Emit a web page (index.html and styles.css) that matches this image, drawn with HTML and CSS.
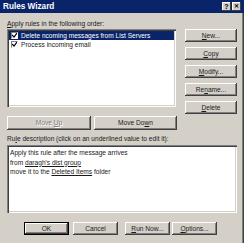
FILE: index.html
```html
<!DOCTYPE html>
<html lang="en">
<head>
    <meta charset="UTF-8">
    <title>Rules Wizard</title>
    <link rel="stylesheet" href="styles.css">
</head>
<body>
<div class="window">
    <div class="titlebar">
        <span class="title">Rules Wizard</span>
        <span class="tbtn">?</span>
        <span class="tbtn close">&#x2715;</span>
    </div>

    <div class="content">
        <div class="label"><u>A</u>pply rules in the following order:</div>

        <div class="toprow">
            <div class="listbox">
                <div class="row selected">
                    <span class="check"><svg width="5" height="5" viewBox="0 0 5 5"><path d="M0 2 L2 4 L5 0" fill="none" stroke="#000" stroke-width="1.2"/></svg></span>
                    Delete ncoming messages from List Servers
                </div>
                <div class="row">
                    <span class="check"><svg width="5" height="5" viewBox="0 0 5 5"><path d="M0 2 L2 4 L5 0" fill="none" stroke="#000" stroke-width="1.2"/></svg></span>
                    Process incoming email
                </div>
            </div>
            <div class="sidebtns">
                <div class="btn"><u>N</u>ew...</div>
                <div class="btn"><u>C</u>opy</div>
                <div class="btn"><u>M</u>odify...</div>
                <div class="btn">Re<u>n</u>ame...</div>
                <div class="btn"><u>D</u>elete</div>
            </div>
        </div>

        <div class="moverow">
            <div class="btn disabled move-up">Move <u>U</u>p</div>
            <div class="btn move-down">Move Do<u>w</u>n</div>
        </div>

        <div class="label desc-label">Ru<u>l</u>e description (click on an underlined value to edit it):</div>

        <div class="descbox">
            <div>Apply this rule after the message arrives</div>
            <div>from <u>daragh's dist group</u></div>
            <div>move it to the <u>Deleted Items</u> folder</div>
        </div>

        <div class="bottomrow">
            <div class="btn default ok">OK</div>
            <div class="btn cancel">Cancel</div>
            <div class="btn run"><u>R</u>un Now...</div>
            <div class="btn options"><u>O</u>ptions...</div>
        </div>
    </div>
</div>
</body>
</html>
```

FILE: styles.css
```css
body {
    margin: 0;
    background: #d4d0c8;
}

.window {
    width: 244px;
    height: 243px;
    background: #d4d0c8;
    box-shadow: inset -1px 0 #404040, inset -2px 0 #808080;
    font-family: "Liberation Sans", Arial, sans-serif;
    font-size: 6.6px;
    color: #1a1a1a;
    overflow: hidden;
}

.titlebar {
    height: 13px;
    background: #0a246a;
    display: flex;
    align-items: center;
    padding: 0 3px 0 3px;
}

.title {
    flex: 1;
    color: #fff;
    font-weight: bold;
    font-size: 8.2px;
}

.tbtn {
    width: 9px;
    height: 9px;
    background: #d4d0c8;
    box-shadow: inset -1px -1px #404040, inset 1px 1px #fff;
    font-size: 7px;
    font-weight: bold;
    line-height: 9px;
    text-align: center;
    color: #000;
}

.tbtn.close {
    margin-left: 1px;
    font-size: 6px;
}

.content {
    padding: 0 7px;
}

.label {
    line-height: 9px;
    margin-top: 6px;
}

.toprow {
    display: flex;
    align-items: flex-start;
    margin-top: 1px;
}

.listbox {
    width: 169px;
    height: 78px;
    background: #fff;
    box-sizing: border-box;
    padding: 2px 1px;
    box-shadow: inset 1px 1px #808080, inset 2px 2px #404040, inset -1px -1px #fff, inset -2px -2px #d4d0c8;
}

.row {
    height: 9px;
    line-height: 9px;
    display: flex;
    align-items: center;
    padding-left: 2px;
    margin-left: 1px;
    margin-right: 1px;
}

.row.selected {
    background: #0a246a;
    color: #fff;
}

.check {
    width: 7px;
    height: 7px;
    box-sizing: border-box;
    background: #fff;
    border: 1px solid #808080;
    border-right-color: #fff;
    border-bottom-color: #fff;
    display: flex;
    align-items: center;
    justify-content: center;
    margin-right: 3px;
}

.sidebtns {
    display: flex;
    flex-direction: column;
    gap: 5px;
    margin-left: 9px;
    width: 52px;
}

.btn {
    height: 13px;
    line-height: 13px;
    text-align: center;
    background: #d4d0c8;
    box-sizing: border-box;
    box-shadow: inset -1px -1px #404040, inset 1px 1px #fff, inset -2px -2px #808080;
}

.btn.disabled {
    color: #808080;
    text-shadow: 1px 1px #fff;
}

.moverow {
    display: flex;
    margin-top: 2px;
}

.move-up {
    width: 84px;
    height: 14px;
    line-height: 14px;
}

.move-down {
    width: 83px;
    height: 14px;
    line-height: 14px;
    margin-left: 3px;
}

.desc-label {
    margin-top: 4px;
}

.descbox {
    height: 68px;
    margin-top: 2px;
    background: #fff;
    box-sizing: border-box;
    padding: 3px 3px;
    line-height: 9.5px;
    box-shadow: inset 1px 1px #808080, inset 2px 2px #404040, inset -1px -1px #fff, inset -2px -2px #d4d0c8;
}

.bottomrow {
    display: flex;
    margin-top: 9px;
}

.bottomrow .btn {
    width: 45px;
}

.btn.default {
    box-shadow: inset 0 0 0 1px #000, inset -2px -2px #404040, inset 2px 2px #fff, inset -3px -3px #808080;
}

.ok {
    margin-left: 17px;
}

.cancel {
    margin-left: 4px;
}

.run {
    margin-left: 7px;
}

.options {
    margin-left: 2px;
}
```
